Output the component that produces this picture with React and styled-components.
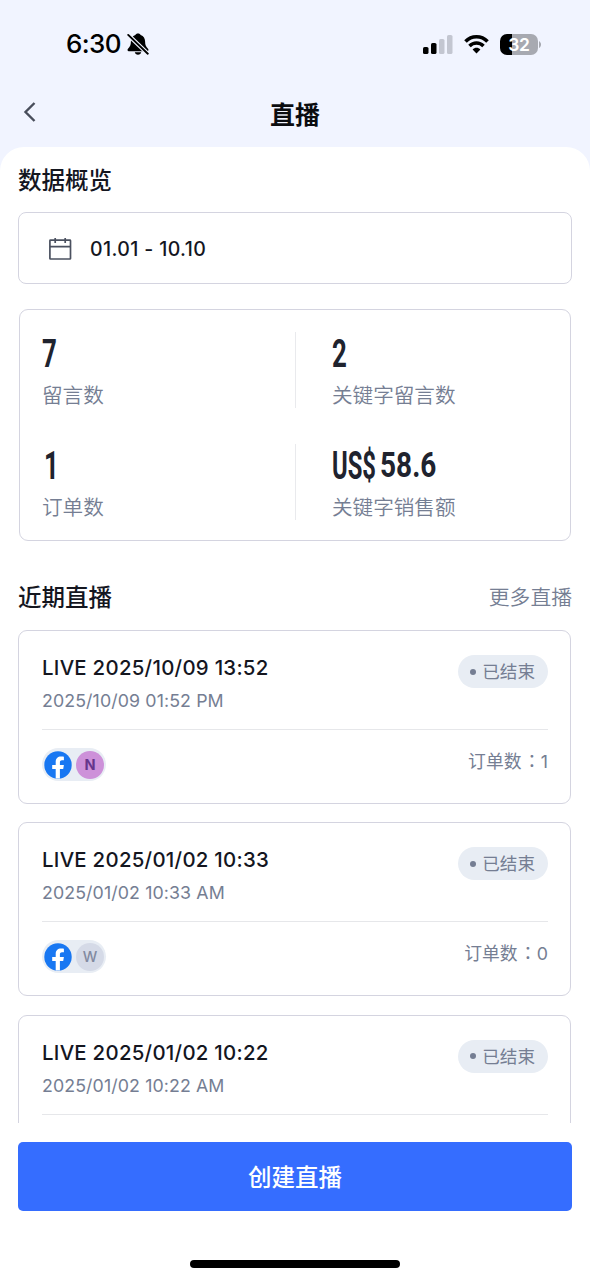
import styled, { createGlobalStyle } from "styled-components";

const colors = {
  ink: "#14161f",
  text: "#20232e",
  muted: "#757e93",
  border: "#d4d4e0",
  divider: "#e6e7ea",
  pill: "#e8edf4",
  primary: "#356dff",
};

const GlobalStyle = createGlobalStyle`
  * {
    box-sizing: border-box;
  }

  body {
    margin: 0;
    background: #fff;
    font-family: Inter, "Noto Sans CJK SC", sans-serif;
    color: ${colors.ink};
  }

  h1, h2, h3, p {
    margin: 0;
  }

  button {
    padding: 0;
    border: 0;
    background: none;
    font: inherit;
    color: inherit;
  }
`;

const Screen = styled.div`
  display: flex;
  flex-direction: column;
  width: 590px;
  height: 1280px;
  overflow: hidden;
  background: #f1f4ff;
`;

const StatusBar = styled.div`
  display: flex;
  align-items: center;
  justify-content: space-between;
  height: 88px;
  padding: 0 49px 0 66px;
  color: #000;
`;

const StatusGroup = styled.div`
  display: flex;
  align-items: center;
  gap: ${(props) => props.$gap}px;
`;

const Clock = styled.span`
  font-size: 26px;
  font-weight: 550;
  line-height: 32px;
  letter-spacing: -0.6px;
`;

const Battery = styled.div`
  display: flex;
  align-items: center;
  gap: 1px;
`;

const BatteryBody = styled.div`
  width: 38px;
  height: 21px;
  border-radius: 7px;
  background: linear-gradient(to right, #000 12px, #a7a9b1 12px);
  color: #fff;
  font-size: 17.5px;
  font-weight: 600;
  line-height: 21px;
  text-align: center;
  letter-spacing: -0.3px;
`;

const NavBar = styled.header`
  display: grid;
  grid-template-columns: 40px 1fr 40px;
  align-items: center;
  height: 59px;
  padding: 0 18px 6px;
`;

const BackButton = styled.button`
  display: flex;
  padding: 0 0 6px 5px;
`;

const NavTitle = styled.h1`
  font-size: 25px;
  font-weight: 600;
  line-height: 36px;
  text-align: center;
  color: #0b0c10;
`;

const Sheet = styled.main`
  display: flex;
  flex-direction: column;
  height: 976px;
  padding: 0 18px;
  overflow: hidden;
  border-radius: 24px 24px 0 0;
  background: #fff;
`;

const SectionTitle = styled.h2`
  font-size: 23.5px;
  font-weight: 500;
  line-height: 36px;
  color: ${colors.ink};
`;

const OverviewTitle = styled(SectionTitle)`
  margin: 16px 0 13px;
`;

const DateField = styled.div`
  display: flex;
  flex-shrink: 0;
  align-items: center;
  gap: 18px;
  height: 72px;
  padding-top: 1px;
  padding-left: 29px;
  border: 1px solid ${colors.border};
  border-radius: 8px;
  font-size: 19.5px;
  font-weight: 450;
  letter-spacing: 0.38px;
`;

const Stats = styled.section`
  display: grid;
  flex-shrink: 0;
  grid-template-columns: 275px 1fr;
  grid-template-rows: 76px 76px;
  row-gap: 36px;
  height: 232px;
  margin: 25px 1px 38px;
  padding-top: 22px;
  border: 1px solid ${colors.border};
  border-radius: 9px;
`;

const Stat = styled.div`
  padding-left: ${(props) => (props.$divided ? 36 : 22)}px;
  border-left: ${(props) => (props.$divided ? "1px solid #e9eaed" : "0")};
`;

const StatValue = styled.div`
  display: flex;
  align-items: center;
  height: 44px;
  padding-left: ${(props) => props.$inset || 0}px;
  font-family: Roboto, sans-serif;
  font-weight: 700;
  line-height: 44px;
  color: ${colors.text};
`;

const Condensed = styled.span`
  width: ${(props) => props.$width}px;
  font-size: ${(props) => props.$size || 38}px;
  white-space: nowrap;
  transform: scaleX(${(props) => props.$scale || 0.68});
  transform-origin: left center;
`;

const StatLabel = styled.p`
  font-size: 20.6px;
  font-weight: 350;
  line-height: 40px;
  color: ${colors.muted};
`;

const SectionHeader = styled.div`
  display: flex;
  align-items: center;
  justify-content: space-between;
  flex-shrink: 0;
  padding-top: 1px;
  margin-bottom: 14px;
`;

const MoreLink = styled.button`
  font-size: 20.8px;
  font-weight: 350;
  line-height: 36px;
  color: ${colors.muted};
`;

const LiveList = styled.div`
  display: flex;
  flex-direction: column;
  flex-shrink: 0;
  gap: 18.25px;
  margin-right: 1px;
`;

const LiveCard = styled.article`
  height: 174px;
  padding: 24px 22px 0 23px;
  border: 1px solid ${colors.border};
  border-radius: 9px;
`;

const CardTop = styled.div`
  display: flex;
  align-items: flex-start;
  justify-content: space-between;
  height: 75px;
  border-bottom: 1px solid ${colors.divider};
`;

const LiveTitle = styled.h3`
  font-size: 20.4px;
  font-weight: 450;
  line-height: 26px;
  letter-spacing: 0.27px;
`;

const LiveTime = styled.p`
  margin-top: 8px;
  font-size: 17.8px;
  font-weight: 380;
  line-height: 24px;
  letter-spacing: 0.1px;
  color: ${colors.muted};
`;

const StatusPill = styled.span`
  display: flex;
  align-items: center;
  gap: 6px;
  height: 33px;
  padding: 0 13px 0 12px;
  border-radius: 17px;
  background: ${colors.pill};
  font-size: 17.6px;
  line-height: 33px;
  color: ${colors.muted};

  &::before {
    content: "";
    width: 6px;
    height: 6px;
    border-radius: 50%;
    background: ${colors.muted};
  }
`;

const CardBottom = styled.div`
  display: flex;
  justify-content: space-between;
  padding-top: 18px;
`;

const Channels = styled.div`
  display: flex;
  align-items: center;
  gap: 4px;
  width: 64px;
  height: 33px;
  padding: 0 2px;
  border-radius: 17px;
  background: ${colors.pill};
`;

const Avatar = styled.span`
  width: 28px;
  height: 28px;
  border-radius: 50%;
  background: ${(props) => (props.$letter === "N" ? "#cd91d9" : "#d5dae7")};
  color: ${(props) => (props.$letter === "N" ? "#66358c" : "#828aa0")};
  font-size: 14.5px;
  font-weight: ${(props) => (props.$letter === "N" ? 700 : 500)};
  line-height: 28px;
  text-align: center;
`;

const OrderCount = styled.span`
  font-family: Inter, "Noto Sans CJK TC", sans-serif;
  font-size: 17.8px;
  font-weight: 380;
  line-height: 27px;
  color: ${colors.muted};
`;

const Colon = styled.span`
  margin-left: 1.5px;
`;

const Footer = styled.footer`
  display: flex;
  flex: 1;
  flex-direction: column;
  align-items: center;
  justify-content: space-between;
  padding: 19px 18px 12px;
  background: #fff;
`;

const CreateButton = styled.button`
  width: 100%;
  height: 69px;
  padding-bottom: 2px;
  border-radius: 5px;
  background: ${colors.primary};
  color: #fff;
  font-size: 23.5px;
  font-weight: 500;
`;

const HomeIndicator = styled.div`
  width: 210px;
  height: 8px;
  border-radius: 4px;
  background: #000;
`;

const BellOffIcon = () => (
  <svg width="22" height="22" viewBox="0 0 22 22">
    <path
      d="M11 .4C9.600.4 8.700 1 8.300 2 5.300 3 3.900 5.600 3.900 8.600c0 3.700-1 5.300-2.900 7.200-.9 1-.5 2.400.8 2.400h18.400c1.300 0 1.700-1.400.8-2.400-1.900-1.900-2.900-3.500-2.900-7.200 0-3-1.400-5.600-4.400-6.600C13.300 1 12.400.4 11 .4Z"
      fill="#000"
    />
    <path d="M7.800 19.300h6.400c-.3 1.500-1.500 2.400-3.200 2.400s-2.900-.9-3.200-2.400Z" fill="#000" />
    <path d="M0 .8 22 21.800" stroke="#f1f4ff" strokeWidth="4.200" />
    <path d="M1.200 1.900 20.800 20.700" stroke="#000" strokeWidth="1.900" strokeLinecap="round" />
  </svg>
);

const SignalIcon = () => (
  <svg width="30" height="19" viewBox="0 0 30 19">
    <rect x="0" y="12" width="5.500" height="7" rx="1.600" />
    <rect x="8" y="8" width="5.500" height="11" rx="1.600" />
    <rect x="16" y="4" width="5.500" height="15" rx="1.600" fill="#c3c6d1" />
    <rect x="24" y="0" width="5.500" height="19" rx="1.600" fill="#c3c6d1" />
  </svg>
);

const WifiIcon = () => (
  <svg width="25" height="20" viewBox="0 0 25 20" fill="none" stroke="#000" strokeWidth="3.500">
    <path d="M1.500 7.500C7.500 1 17.500 1 23.500 7.500" />
    <path d="M5.500 12c4-4 10-4 14 0" />
    <path d="M8.600 15.500c2.200-2.200 5.600-2.200 7.800 0l-3.900 4Z" fill="#000" stroke="none" />
  </svg>
);

const BatteryCap = () => (
  <svg width="2" height="7" viewBox="0 0 2 7">
    <path d="M0 0c2.700 2 2.700 5 0 7Z" fill="#a7a9b1" />
  </svg>
);

const BackIcon = () => (
  <svg width="14" height="20" viewBox="0 0 14 20" fill="none">
    <path d="M11.500 1 2.500 10l9 9" stroke="#484d5b" strokeWidth="2.400" />
  </svg>
);

const CalendarIcon = () => (
  <svg width="24" height="24" viewBox="0 0 24 24" fill="none" stroke="#4b5160" strokeWidth="1.700">
    <rect x="1.900" y="3.100" width="20.600" height="18.900" rx="0.600" />
    <path d="M2 9.700h20.500M7.200 1v5M17.200 1v5" />
  </svg>
);

const FacebookIcon = () => (
  <svg width="28" height="28" viewBox="0 0 28 28">
    <circle cx="14" cy="14" r="13.700" fill="#1877f2" />
    <path
      d="M11.700 27.500V18H8.200v-4.100h3.500v-3c0-3.500 2.100-5.400 5.300-5.400 1.500 0 2.900.2 2.900.2v3.500h-1.800c-1.800 0-2.200 1-2.200 2.200v2.500h4L19.200 18h-3.300v9.500Z"
      fill="#fff"
    />
  </svg>
);

const lives = [
  { title: "LIVE 2025/10/09 13:52", time: "2025/10/09 01:52 PM", page: "N", orders: 1 },
  { title: "LIVE 2025/01/02 10:33", time: "2025/01/02 10:33 AM", page: "W", orders: 0 },
  { title: "LIVE 2025/01/02 10:22", time: "2025/01/02 10:22 AM" },
];

const LiveItem = ({ live }) => (
  <LiveCard>
    <CardTop>
      <div>
        <LiveTitle>{live.title}</LiveTitle>
        <LiveTime>{live.time}</LiveTime>
      </div>
      <StatusPill>已结束</StatusPill>
    </CardTop>
    {live.page && (
      <CardBottom>
        <Channels>
          <FacebookIcon />
          <Avatar $letter={live.page}>{live.page}</Avatar>
        </Channels>
        <OrderCount>
          订单数<Colon>：</Colon>
          {live.orders}
        </OrderCount>
      </CardBottom>
    )}
  </LiveCard>
);

const App = () => (
  <>
    <GlobalStyle />
    <Screen>
      <StatusBar>
        <StatusGroup $gap={6}>
          <Clock>6:30</Clock>
          <BellOffIcon />
        </StatusGroup>
        <StatusGroup $gap={11}>
          <SignalIcon />
          <WifiIcon />
          <Battery>
            <BatteryBody>32</BatteryBody>
            <BatteryCap />
          </Battery>
        </StatusGroup>
      </StatusBar>
      <NavBar>
        <BackButton aria-label="返回">
          <BackIcon />
        </BackButton>
        <NavTitle>直播</NavTitle>
      </NavBar>
      <Sheet>
        <OverviewTitle>数据概览</OverviewTitle>
        <DateField>
          <CalendarIcon />
          01.01 - 10.10
        </DateField>
        <Stats>
          <Stat>
            <StatValue>
              <Condensed>7</Condensed>
            </StatValue>
            <StatLabel>留言数</StatLabel>
          </Stat>
          <Stat $divided>
            <StatValue>
              <Condensed>2</Condensed>
            </StatValue>
            <StatLabel>关键字留言数</StatLabel>
          </Stat>
          <Stat>
            <StatValue $inset={2}>
              <Condensed>1</Condensed>
            </StatValue>
            <StatLabel>订单数</StatLabel>
          </Stat>
          <Stat $divided>
            <StatValue>
              <Condensed $width={48} $size={39} $scale={0.61}>
                US$
              </Condensed>
              <Condensed $size={35} $scale={0.8}>
                58.6
              </Condensed>
            </StatValue>
            <StatLabel>关键字销售额</StatLabel>
          </Stat>
        </Stats>
        <SectionHeader>
          <SectionTitle>近期直播</SectionTitle>
          <MoreLink>更多直播</MoreLink>
        </SectionHeader>
        <LiveList>
          {lives.map((live) => (
            <LiveItem key={live.title} live={live} />
          ))}
        </LiveList>
      </Sheet>
      <Footer>
        <CreateButton>创建直播</CreateButton>
        <HomeIndicator />
      </Footer>
    </Screen>
  </>
);

export default App;
